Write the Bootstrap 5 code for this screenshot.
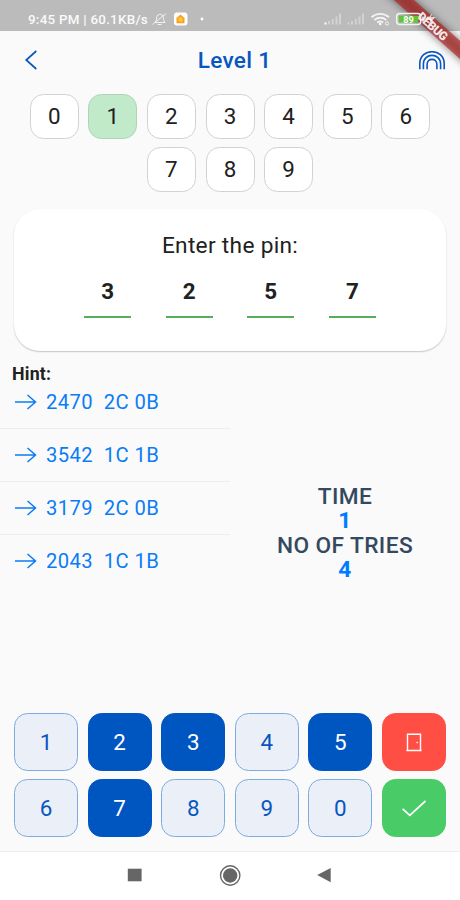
<!DOCTYPE html>
<html lang="en">
<head>
<meta charset="utf-8">
<meta name="viewport" content="width=device-width, initial-scale=1">
<title>Level 1</title>
<link href="https://cdn.jsdelivr.net/npm/bootstrap@5.3.0/dist/css/bootstrap.min.css" rel="stylesheet">
<style>
body{font-family:Roboto,"Liberation Sans",sans-serif;background:#fafafa;color:#212121;width:460px;height:900px;overflow:hidden;line-height:1}
svg{display:block;flex:none}
.status{height:31px;background:#bbb;color:#fafafa;font-size:13.4px;font-weight:500;letter-spacing:.25px;padding:7px 0 0 28px}
.stat-text{padding-top:6px;width:122px}
.stat-icons{z-index:2;letter-spacing:0}
.appbar{height:59px;color:#0857c0;padding:0 15px 0 24px}
.title-text{font-size:22.6px;font-weight:500;letter-spacing:.3px;padding-top:2px}
.back-icon{margin-bottom:2px}
.tiles{gap:8.5px 9.6px;padding:4px 26px 0;height:119px}
.tile{width:49px;height:44.6px;border:1.2px solid #d2d2d2;border-radius:13.5px;background:#fff;font-size:22.4px}
.tile-on{background:#c0eaca;border-color:#b0d3b8}
.pin-card{height:142px;margin:0 14px;border-radius:26px;background:#fff;box-shadow:0 1px 1.5px rgba(0,0,0,.22)}
.prompt{font-size:22.7px;letter-spacing:.3px;padding-top:26px}
.pins{gap:34.6px;padding-top:22.7px}
.pin{width:47px;height:38px;border-bottom:2.4px solid #56ad5b;font-size:22.4px;font-weight:700}
.middle{height:350px}
.hint-title{font-size:17.8px;font-weight:700;letter-spacing:.2px;padding:13.6px 0 0 12px;height:25px}
.hint{height:53px;color:#0a7cf5;font-size:20.2px;letter-spacing:.4px;padding-left:15px;border-bottom:1px solid #ededed;white-space:pre}
.hint:last-child{border:0;height:52px}
.stats{font-size:22.7px;font-weight:500;letter-spacing:.4px;line-height:24.4px;color:#34495e;padding-top:134px}
.stats b{font-weight:700;color:#007dff}
.keypad{gap:8.3px 9.6px;padding:0 14px;grid-template-columns:repeat(6,64px);grid-auto-rows:58px;height:137.5px;justify-content:center}
.key{border-radius:13.5px;border:1.2px solid #7eabdf;background:#ebeff8;color:#0857c0;font-size:22.4px;padding:0;line-height:1}
.key-on{background:#0056c1;border-color:#0056c1;color:#fff}
.key-exit{background:#ff4f45;border-color:#ff4f45}
.key-ok{background:#49cc68;border-color:#49cc68}
.sysnav{height:49.5px;background:#fff;border-top:1px solid #eee}
.debug{right:0;top:0;z-index:1}
</style>
<script src="https://cdn.jsdelivr.net/npm/bootstrap@5.3.0/dist/js/bootstrap.bundle.min.js"></script>
</head>
<body class="position-relative d-flex flex-column">
<div class="status d-flex align-items-start">
  <span class="stat-text text-nowrap">9:45 PM | 60.1KB/s</span>
  <svg class="stat-icons position-relative" width="310" height="24" viewBox="150 7 310 24" fill="none" stroke="#f2f2f2">
    <path d="M155 22.5c2-1.4 1-6 3-7.500c2-1.500 4-.5 5 1c.7 2 .2 5 2 6.500zM152.500 24.500L166 13.500M157.500 24.500h4" stroke-width="1"/>
    <rect x="174" y="12.500" width="13.500" height="13" rx="3" fill="#fff" stroke="none"/>
    <path d="M175.800 18.500l4.700-4 4.700 4h-.700v4.800h-8v-4.800z" fill="#fba11c" stroke="none"/>
    <rect x="178.500" y="17.500" width="4" height="4" rx="1" fill="#ffc94d" stroke="none"/>
    <circle cx="202" cy="19" r="1.400" fill="#fff" stroke="none"/>
    <g stroke-width="2"><path d="M325.500 24.500v-2" stroke="#fff"/><path d="M329 24.500v-3.500M332.800 24.500v-5.500M336.500 24.500v-8M340 24.500v-11" stroke="#d2d2d2"/>
    <path d="M348.500 24.500v-2M352 24.500v-3.500M355.800 24.500v-5.500M359.500 24.500v-8M363 24.500v-11" stroke="#d2d2d2"/></g>
    <path d="M371.500 17.200c5-4.400 12.500-4.400 17.500 0M374.300 20c3.500-3 8.500-3 12 0M377.200 22.600c2-1.600 4-1.600 6 0" stroke-width="1.900"/>
    <circle cx="380.200" cy="24" r="1.200" fill="#fff" stroke="none"/><circle cx="387" cy="23.500" r="1.600" stroke-width="1"/>
    <rect x="396.700" y="13.500" width="24" height="11" rx="3" stroke-width="1.500"/>
    <rect x="398.800" y="15.700" width="19.500" height="6.700" fill="#62c335" stroke="none"/>
    <path d="M423 16.500v5" stroke-width="2" opacity=".7"/>
    <text x="403.300" y="22.500" font-size="9.200" font-weight="700" fill="#fff" stroke="none">89</text>
    <path d="M432.500 13l-6 7h4l-2 5 7-8h-4.500z" fill="#fff" fill-opacity=".75" stroke="none"/>
  </svg>
</div>
<header class="appbar d-flex align-items-center justify-content-between">
  <svg class="back-icon" width="26" height="20" viewBox="0 0 26 20" fill="none" stroke="#0857c0" stroke-width="1.700"><path d="M12.300 1L2.200 10l10.100 9"/></svg>
  <div class="title-text">Level 1</div>
  <svg width="26" height="20" viewBox="0 0 26 20" fill="none" stroke="#0857c0" stroke-width="1.600"><path d="M.8 18.300V12.700C.8-3.300 25.200-3.300 25.200 12.700V18.300M4.400 18.300v-5.300c0-11.500 17.200-11.500 17.200 0v5.300M8.100 18.300v-4.800c0-6.800 9.800-6.800 9.800 0V18.300"/></svg>
</header>
<div class="tiles d-flex flex-wrap justify-content-center align-content-start">
  <div class="tile d-flex align-items-center justify-content-center">0</div>
  <div class="tile tile-on d-flex align-items-center justify-content-center">1</div>
  <div class="tile d-flex align-items-center justify-content-center">2</div>
  <div class="tile d-flex align-items-center justify-content-center">3</div>
  <div class="tile d-flex align-items-center justify-content-center">4</div>
  <div class="tile d-flex align-items-center justify-content-center">5</div>
  <div class="tile d-flex align-items-center justify-content-center">6</div>
  <div class="tile d-flex align-items-center justify-content-center">7</div>
  <div class="tile d-flex align-items-center justify-content-center">8</div>
  <div class="tile d-flex align-items-center justify-content-center">9</div>
</div>
<section class="pin-card text-center">
  <div class="prompt">Enter the pin:</div>
  <div class="pins d-flex justify-content-center">
    <div class="pin">3</div><div class="pin">2</div><div class="pin">5</div><div class="pin">7</div>
  </div>
</section>
<main class="middle d-flex">
  <div class="w-50">
    <div class="hint-title">Hint:</div>
    <div class="hints">
      <div class="hint d-flex align-items-center"><svg width="31" height="16" viewBox="0 0 31 16" fill="none" stroke="#0a7cf5" stroke-width="1.500"><path d="M0 8h20.500M12.500 1l8 7-8 7"/></svg><span>2470  2C 0B</span></div>
      <div class="hint d-flex align-items-center"><svg width="31" height="16" viewBox="0 0 31 16" fill="none" stroke="#0a7cf5" stroke-width="1.500"><path d="M0 8h20.500M12.500 1l8 7-8 7"/></svg><span>3542  1C 1B</span></div>
      <div class="hint d-flex align-items-center"><svg width="31" height="16" viewBox="0 0 31 16" fill="none" stroke="#0a7cf5" stroke-width="1.500"><path d="M0 8h20.500M12.500 1l8 7-8 7"/></svg><span>3179  2C 0B</span></div>
      <div class="hint d-flex align-items-center"><svg width="31" height="16" viewBox="0 0 31 16" fill="none" stroke="#0a7cf5" stroke-width="1.500"><path d="M0 8h20.500M12.500 1l8 7-8 7"/></svg><span>2043  1C 1B</span></div>
    </div>
  </div>
  <div class="stats w-50 text-center">TIME<br><b>1</b><br>NO OF TRIES<br><b>4</b></div>
</main>
<div class="keypad d-grid mt-auto">
  <button class="key">1</button><button class="key key-on">2</button><button class="key key-on">3</button><button class="key">4</button><button class="key key-on">5</button>
  <button class="key key-exit d-flex align-items-center justify-content-center" aria-label="Exit"><svg width="16" height="19" viewBox="0 0 16 19" fill="none" stroke="#fff" stroke-width="1.400"><path d="M.5 17.500h15M1.500 17.500V1.200h13v16.300"/><circle cx="11.200" cy="9.500" r=".5" fill="#fff" stroke-width=".7"/></svg></button>
  <button class="key">6</button><button class="key key-on">7</button><button class="key">8</button><button class="key">9</button><button class="key">0</button>
  <button class="key key-ok d-flex align-items-center justify-content-center" aria-label="Submit"><svg width="24" height="17" viewBox="0 0 24 17" fill="none" stroke="#fff" stroke-width="1.700"><path d="M.6 8.800l7.200 6.500L23.500 1"/></svg></button>
</div>
<footer class="sysnav d-flex justify-content-center">
  <svg width="210" height="48" viewBox="125 852 210 48" fill="#666"><rect x="127.800" y="868.700" width="13.800" height="12.600"/><circle cx="230.200" cy="875.500" r="9.700" fill="none" stroke="#666" stroke-width="1.400"/><circle cx="230.200" cy="875.500" r="7.200"/><path d="M330.700 868v14.300L317.200 875z"/></svg>
</footer>
<svg class="debug position-absolute" width="100" height="75" viewBox="360 0 100 75">
  <defs><filter id="soft" x="-50%" y="-50%" width="200%" height="200%"><feGaussianBlur stdDeviation="4"/></filter></defs>
  <path d="M376-16L396-16 480 58.500V77z" fill="#000" opacity=".5" filter="url(#soft)"/>
  <path d="M376-16L396-16 480 58.500V77z" fill="#b71c1c" opacity=".63"/>
  <text transform="translate(416.500 17.500) rotate(42)" font-size="12" font-weight="900" fill="#fff" fill-opacity=".9" textLength="36">DEBUG</text>
</svg>
</body>
</html>
